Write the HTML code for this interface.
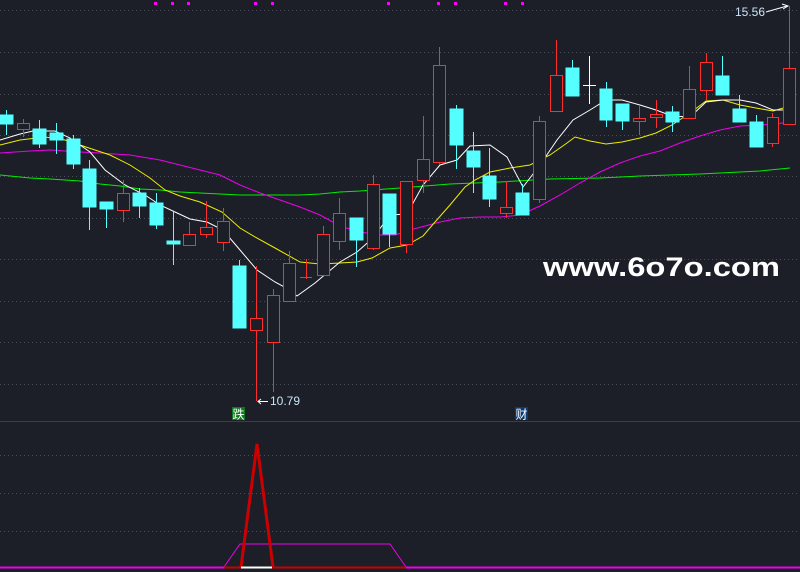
<!DOCTYPE html>
<html><head><meta charset="utf-8"><style>
html,body{margin:0;padding:0;background:#1c1f27;width:800px;height:572px;overflow:hidden}
svg{display:block}
text{font-family:"Liberation Sans","Noto Sans CJK SC",sans-serif}
.r line,.r rect{stroke:#ff2e2e !important}
</style></head><body>
<svg width="800" height="572" viewBox="0 0 800 572" xmlns="http://www.w3.org/2000/svg">
<rect width="800" height="572" fill="#1c1f27"/>
<g stroke="#4a4e58" stroke-width="1" stroke-dasharray="1,3">
<line x1="0" y1="10.5" x2="800" y2="10.5"/><line x1="0" y1="52.5" x2="800" y2="52.5"/>
<line x1="0" y1="94.5" x2="800" y2="94.5"/><line x1="0" y1="135.5" x2="800" y2="135.5"/>
<line x1="0" y1="176.5" x2="800" y2="176.5"/><line x1="0" y1="218.5" x2="800" y2="218.5"/>
<line x1="0" y1="259.5" x2="800" y2="259.5"/><line x1="0" y1="301.5" x2="800" y2="301.5"/>
<line x1="0" y1="342.5" x2="800" y2="342.5"/><line x1="0" y1="384.5" x2="800" y2="384.5"/>
<line x1="0" y1="455.5" x2="800" y2="455.5"/><line x1="0" y1="493.5" x2="800" y2="493.5"/>
<line x1="0" y1="531.5" x2="800" y2="531.5"/>
</g>
<line x1="0" y1="421.5" x2="800" y2="421.5" stroke="#3a3e48" stroke-width="1"/>
<g fill="#ff00ff">
<rect x="154" y="2" width="3" height="3"/><rect x="171" y="2" width="3" height="3"/><rect x="187" y="2" width="3" height="3"/>
<rect x="254" y="2" width="3" height="3"/><rect x="271" y="2" width="3" height="3"/><rect x="387" y="2" width="3" height="3"/>
<rect x="437" y="2" width="3" height="3"/><rect x="454" y="2" width="3" height="3"/><rect x="504" y="2" width="3" height="3"/><rect x="521" y="2" width="3" height="3"/>
</g>
<g fill="none" stroke-width="1">
<polyline stroke="#00ee00" points="0,175 30,178 50,179 80,181 100,184 120,186 140,189 160,190 180,192 200,193 240,195 280,195 300,195 320,194 340,192 360,191 400,188 450,184 500,182 550,179 600,178 640,176 700,174 760,171 790,168"/>
<polyline stroke="#ee00ee" points="0,153 30,151 50,150 80,152 100,153 130,155 160,160 180,165 200,170 220,175 240,185 260,193 280,200 300,207 320,215 340,226 360,232 380,235 395,235 410,230 440,222 460,218 480,217 500,217 520,215 540,206 560,195 580,183 600,172 620,163 640,156 660,151 680,143 700,136 720,130 740,126 760,125 775,124 790,122"/>
<polyline stroke="#eeee00" points="0,145 20,140 45,137 65,140 80,145 110,155 130,165 150,178 165,190 180,196 200,202 222,212 240,228 255,237 275,248 300,262 320,264 340,263 357,262 372,258 390,248 407,245 423,236 435,222 450,205 465,187 475,180 490,172 510,168 530,165 550,155 567,143 575,137 590,141 606,144 622,142 640,138 656,133 672,125 690,113 706,101 723,100 740,105 756,108 773,111 790,106"/>
<polyline stroke="#ffffff" points="0,140 20,134 33,131 55,131 70,138 90,152 105,170 125,185 145,195 160,205 175,212 190,219 207,222 223,230 240,250 257,270 275,282 290,290 297,296 315,283 340,262 357,252 373,238 390,215 407,214 423,185 440,165 457,160 470,146 490,145 507,157 523,187 540,165 557,140 573,120 590,110 606,100 622,100 640,105 656,110 672,116 690,117 706,102 723,100 740,100 756,103 773,110 790,110"/>
</g>
<g fill="#55ffff" stroke="#55ffff">
<line x1="6.5" y1="110" x2="6.5" y2="135"/><rect x="0" y="115" width="13" height="9"/>
<line x1="39.5" y1="120" x2="39.5" y2="148"/><rect x="33" y="129" width="13" height="15"/>
<line x1="56.5" y1="123" x2="56.5" y2="154"/><rect x="50" y="133" width="13" height="7"/>
<line x1="73.5" y1="135" x2="73.5" y2="169"/><rect x="67" y="139" width="13" height="25"/>
<line x1="89.5" y1="160" x2="89.5" y2="230"/><rect x="83" y="169" width="13" height="38"/>
<line x1="106.5" y1="202" x2="106.5" y2="228"/><rect x="100" y="202" width="13" height="7"/>
<line x1="139.5" y1="188" x2="139.5" y2="218"/><rect x="133" y="193" width="13" height="13"/>
<line x1="156.5" y1="193" x2="156.5" y2="229"/><rect x="150" y="203" width="13" height="22"/>
<line x1="173.5" y1="212" x2="173.5" y2="265"/><rect x="167" y="241" width="13" height="3"/>
<line x1="239.5" y1="260" x2="239.5" y2="328"/><rect x="233" y="266" width="13" height="62"/>
<line x1="356.5" y1="218" x2="356.5" y2="267"/><rect x="350" y="218" width="13" height="22"/>
<line x1="389.5" y1="194" x2="389.5" y2="247"/><rect x="383" y="194" width="13" height="40"/>
<line x1="456.5" y1="105" x2="456.5" y2="169"/><rect x="450" y="109" width="13" height="36"/>
<line x1="473.5" y1="132" x2="473.5" y2="193"/><rect x="467" y="151" width="13" height="16"/>
<line x1="489.5" y1="148" x2="489.5" y2="207"/><rect x="483" y="176" width="13" height="23"/>
<line x1="522.5" y1="184" x2="522.5" y2="215"/><rect x="516" y="193" width="13" height="22"/>
<line x1="572.5" y1="60" x2="572.5" y2="96"/><rect x="566" y="68" width="13" height="28"/>
<line x1="606.5" y1="82" x2="606.5" y2="127"/><rect x="600" y="89" width="12" height="31"/>
<line x1="622.5" y1="104" x2="622.5" y2="130"/><rect x="616" y="104" width="13" height="17"/>
<line x1="672.5" y1="106" x2="672.5" y2="132"/><rect x="666" y="112" width="13" height="10"/>
<line x1="722.5" y1="56" x2="722.5" y2="95"/><rect x="716" y="76" width="13" height="19"/>
<line x1="739.5" y1="95" x2="739.5" y2="122"/><rect x="733" y="109" width="13" height="13"/>
<line x1="756.5" y1="115" x2="756.5" y2="147"/><rect x="750" y="122" width="13" height="25"/>
</g>
<g class="r" fill="none" stroke="#ff2e2e" stroke-width="1">
<line x1="23.5" y1="119" x2="23.5" y2="137"/><rect x="17.5" y="123.5" width="12" height="6" fill="#1c1f27"/>
<line x1="123.5" y1="180" x2="123.5" y2="222"/><rect x="117.5" y="193.5" width="12" height="17" fill="#1c1f27"/>
<line x1="189.5" y1="222" x2="189.5" y2="246"/><rect x="183.5" y="234.5" width="12" height="11" fill="#1c1f27"/>
<line x1="206.5" y1="201" x2="206.5" y2="238"/><rect x="200.5" y="227.5" width="12" height="7" fill="#1c1f27"/>
<line x1="223.5" y1="208" x2="223.5" y2="251"/><rect x="217.5" y="221.5" width="12" height="21" fill="#1c1f27"/>
<line x1="256.5" y1="266" x2="256.5" y2="401"/><rect x="250.5" y="318.5" width="12" height="12" fill="#1c1f27"/>
<line x1="273.5" y1="289" x2="273.5" y2="392"/><rect x="267.5" y="295.5" width="12" height="47" fill="#1c1f27"/>
<line x1="289.5" y1="251" x2="289.5" y2="302"/><rect x="283.5" y="263.5" width="12" height="38" fill="#1c1f27"/>
<line x1="306.5" y1="259" x2="306.5" y2="279"/><line x1="300" y1="277.5" x2="312" y2="277.5"/>
<line x1="323.5" y1="226" x2="323.5" y2="275"/><rect x="317.5" y="234.5" width="12" height="41" fill="#1c1f27"/>
<line x1="339.5" y1="198" x2="339.5" y2="250"/><rect x="333.5" y="213.5" width="12" height="28" fill="#1c1f27"/>
<line x1="373.5" y1="175" x2="373.5" y2="250"/><rect x="367.5" y="184.5" width="12" height="64" fill="#1c1f27"/>
<line x1="406.5" y1="181" x2="406.5" y2="253"/><rect x="400.5" y="181.5" width="12" height="63" fill="#1c1f27"/>
<line x1="423.5" y1="116" x2="423.5" y2="193"/><rect x="417.5" y="159.5" width="12" height="21" fill="#1c1f27"/>
<line x1="439.5" y1="47" x2="439.5" y2="165"/><rect x="433.5" y="65.5" width="12" height="97" fill="#1c1f27"/>
<line x1="506.5" y1="181" x2="506.5" y2="218"/><rect x="500.5" y="207.5" width="12" height="6" fill="#1c1f27"/>
<line x1="539.5" y1="116" x2="539.5" y2="203"/><rect x="533.5" y="121.5" width="12" height="78" fill="#1c1f27"/>
<line x1="556.5" y1="40" x2="556.5" y2="112"/><rect x="550.5" y="75.5" width="12" height="36" fill="#1c1f27"/>
<line x1="639.5" y1="106" x2="639.5" y2="135"/><rect x="633.5" y="118.5" width="12" height="3" fill="#1c1f27"/>
<line x1="656.5" y1="100" x2="656.5" y2="128"/><rect x="650.5" y="114.5" width="12" height="3" fill="#1c1f27"/>
<line x1="689.5" y1="66" x2="689.5" y2="118"/><rect x="683.5" y="89.5" width="12" height="29" fill="#1c1f27"/>
<line x1="706.5" y1="53" x2="706.5" y2="100"/><rect x="700.5" y="62.5" width="12" height="28" fill="#1c1f27"/>
<line x1="772.5" y1="113" x2="772.5" y2="147"/><rect x="767.5" y="117.5" width="11" height="26" fill="#1c1f27"/>
<line x1="789.5" y1="6" x2="789.5" y2="124"/><rect x="783.5" y="68.5" width="12" height="56" fill="#1c1f27"/>
</g>
<g stroke="#ffffff"><line x1="589.5" y1="56" x2="589.5" y2="104"/><line x1="583" y1="85.5" x2="596" y2="85.5"/></g>
<text x="735" y="16" font-size="12" fill="#c8e4f8">15.56</text>
<polyline points="766,12 787,6" stroke="#fff" fill="none"/><polyline points="782,4 788,6 783,9" stroke="#fff" fill="none"/>
<text x="270" y="405" font-size="12" fill="#c8e4f8">10.79</text>
<line x1="258" y1="401.5" x2="268" y2="401.5" stroke="#fff"/><polyline points="261,399 258,401.5 261,404" stroke="#fff" fill="none"/>
<rect x="232" y="407" width="13" height="13" fill="#0a7a1a"/>
<text x="232.5" y="418.5" font-size="12" fill="#fff">跌</text>
<rect x="515" y="407" width="13" height="13" fill="#0a3a6e"/>
<text x="515.5" y="418.5" font-size="12" fill="#fff">财</text>
<text x="543" y="276" font-size="27" font-weight="bold" fill="#ffffff" textLength="237" lengthAdjust="spacingAndGlyphs">www.6o7o.com</text>
<polyline points="224,567 240,544 390,544 406,567" fill="none" stroke="#ee00ee" stroke-width="1"/>
<line x1="0" y1="567.5" x2="800" y2="567.5" stroke="#ee00ee" stroke-width="2"/>
<line x1="224" y1="567.5" x2="406" y2="567.5" stroke="#cc0000" stroke-width="2"/>
<polyline points="241,567 257,444 273,567" fill="none" stroke="#cc0000" stroke-width="3"/>
<line x1="241" y1="567.5" x2="272" y2="567.5" stroke="#ffffff" stroke-width="2"/>
</svg>
</body></html>
